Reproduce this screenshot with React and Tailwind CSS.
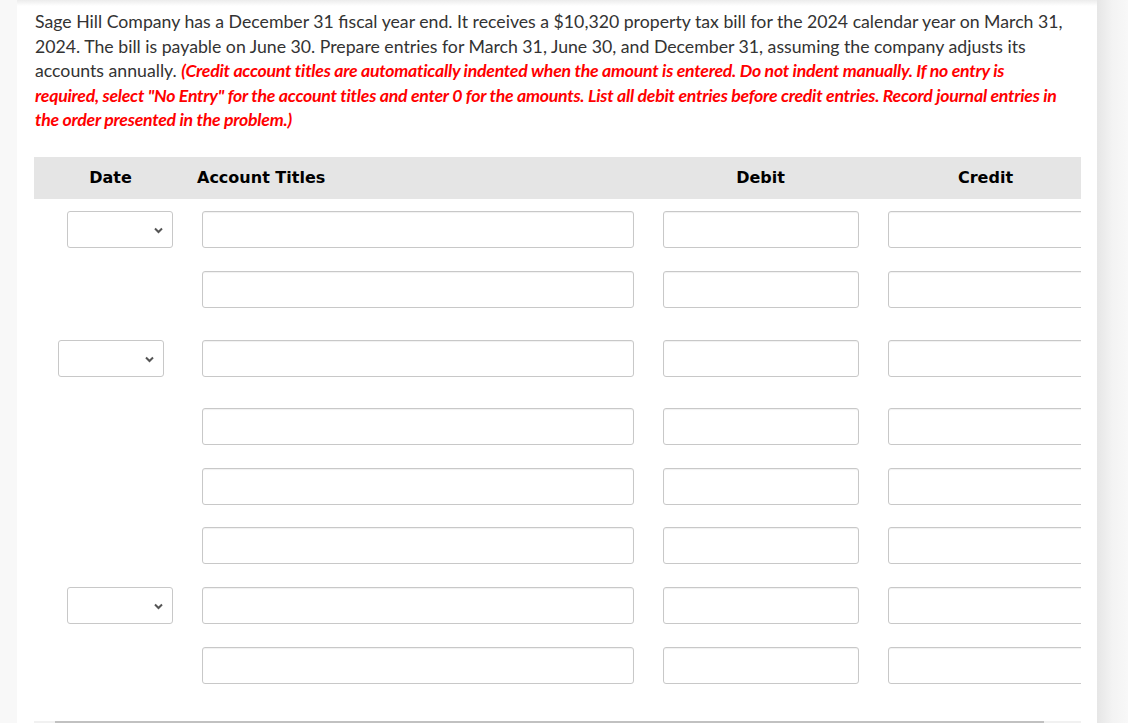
import React from "react";

const rows = [
  { gap: "mt-[12px]", date: "ml-[33px]" },
  { gap: "mt-[23px]", date: null },
  { gap: "mt-[32px]", date: "ml-[24px]" },
  { gap: "mt-[31px]", date: null },
  { gap: "mt-[23px]", date: null },
  { gap: "mt-[22px]", date: null },
  { gap: "mt-[23px]", date: "ml-[33px]" },
  { gap: "mt-[23px]", date: null },
];

function Box({ className }) {
  return (
    <div
      className={`h-[37px] rounded-[3px] border border-[#c8c8c8] bg-white shadow-[inset_0_1px_1px_rgba(0,0,0,0.06)] ${className}`}
    />
  );
}

function DateSelect({ offset }) {
  return (
    <div
      className={`${offset} relative h-[37px] w-[106px] rounded-[3px] border border-[#c8c8c8] bg-white`}
    >
      <svg
        className="absolute right-[9px] top-[15px]"
        width="9"
        height="7"
        viewBox="0 0 9 7"
      >
        <path d="M1 1.5 L4.5 5 L8 1.5" fill="none" stroke="#555" strokeWidth="2" />
      </svg>
    </div>
  );
}

export default function App() {
  return (
    <div className="flex h-[723px] w-[1128px] overflow-hidden bg-[#f8f8f8] font-['Lato',sans-serif]">
      <div className="w-[17px] shrink-0" />
      <div className="relative w-[1080px] shrink-0 bg-white">
        {/* faint top shadow */}
        <div className="absolute left-0 right-0 top-0 h-[6px] bg-gradient-to-b from-[#ececec] to-white" />

        <div className="relative px-[18px] pt-[10px]">
          <p className="w-[1035px] text-[17.7px] leading-[24.6px] text-[#333]">
            Sage Hill Company has a December 31 fiscal year end. It receives a $10,320 property tax bill
            for the 2024 calendar year on March 31, 2024. The bill is payable on June 30. Prepare entries
            for March 31, June 30, and December 31, assuming the company adjusts its accounts annually.{" "}
            <span className="font-bold italic tracking-[-0.25px] text-[#ff0000]">
              (Credit account titles are automatically indented when the amount is entered. Do not indent
              manually. If no entry is required, select "No Entry" for the account titles and enter 0 for
              the amounts. List all debit entries before credit entries. Record journal entries in the order
              presented in the problem.)
            </span>
          </p>

          <div className="mt-[24px] ml-[-1px] w-[1047px] overflow-hidden">
            <div className="w-[1090px]">
              <div className="flex h-[42px] items-center bg-[#e5e5e5] font-['DejaVu_Sans',sans-serif] text-[16px] font-bold text-black">
                <div className="w-[153px] text-center">Date</div>
                <div className="w-[461px] pl-[10px]">Account Titles</div>
                <div className="w-[225px] text-center">Debit</div>
                <div className="w-[225px] text-center">Credit</div>
              </div>

              {rows.map((r, i) => (
                <div key={i} className={`flex ${r.gap}`}>
                  <div className="w-[153px]">{r.date && <DateSelect offset={r.date} />}</div>
                  <div className="w-[461px] px-[15px]">
                    <Box className="w-[432px]" />
                  </div>
                  <div className="w-[225px] px-[15px]">
                    <Box className="w-[196px]" />
                  </div>
                  <div className="w-[251px] pl-[15px]">
                    <Box className="w-[220px]" />
                  </div>
                </div>
              ))}

              {/* horizontal scrollbar */}
              <div className="mt-[37px] flex h-[4px] w-[1047px] bg-[#f1f1f1]">
                <div className="ml-[21px] h-[3px] w-[989px] bg-[#c1c1c1]" />
              </div>
            </div>
          </div>
        </div>
      </div>
      <div className="flex-1 bg-gradient-to-r from-[#e6e6e6] via-[#f3f3f3] to-[#f8f8f8]" />
    </div>
  );
}
